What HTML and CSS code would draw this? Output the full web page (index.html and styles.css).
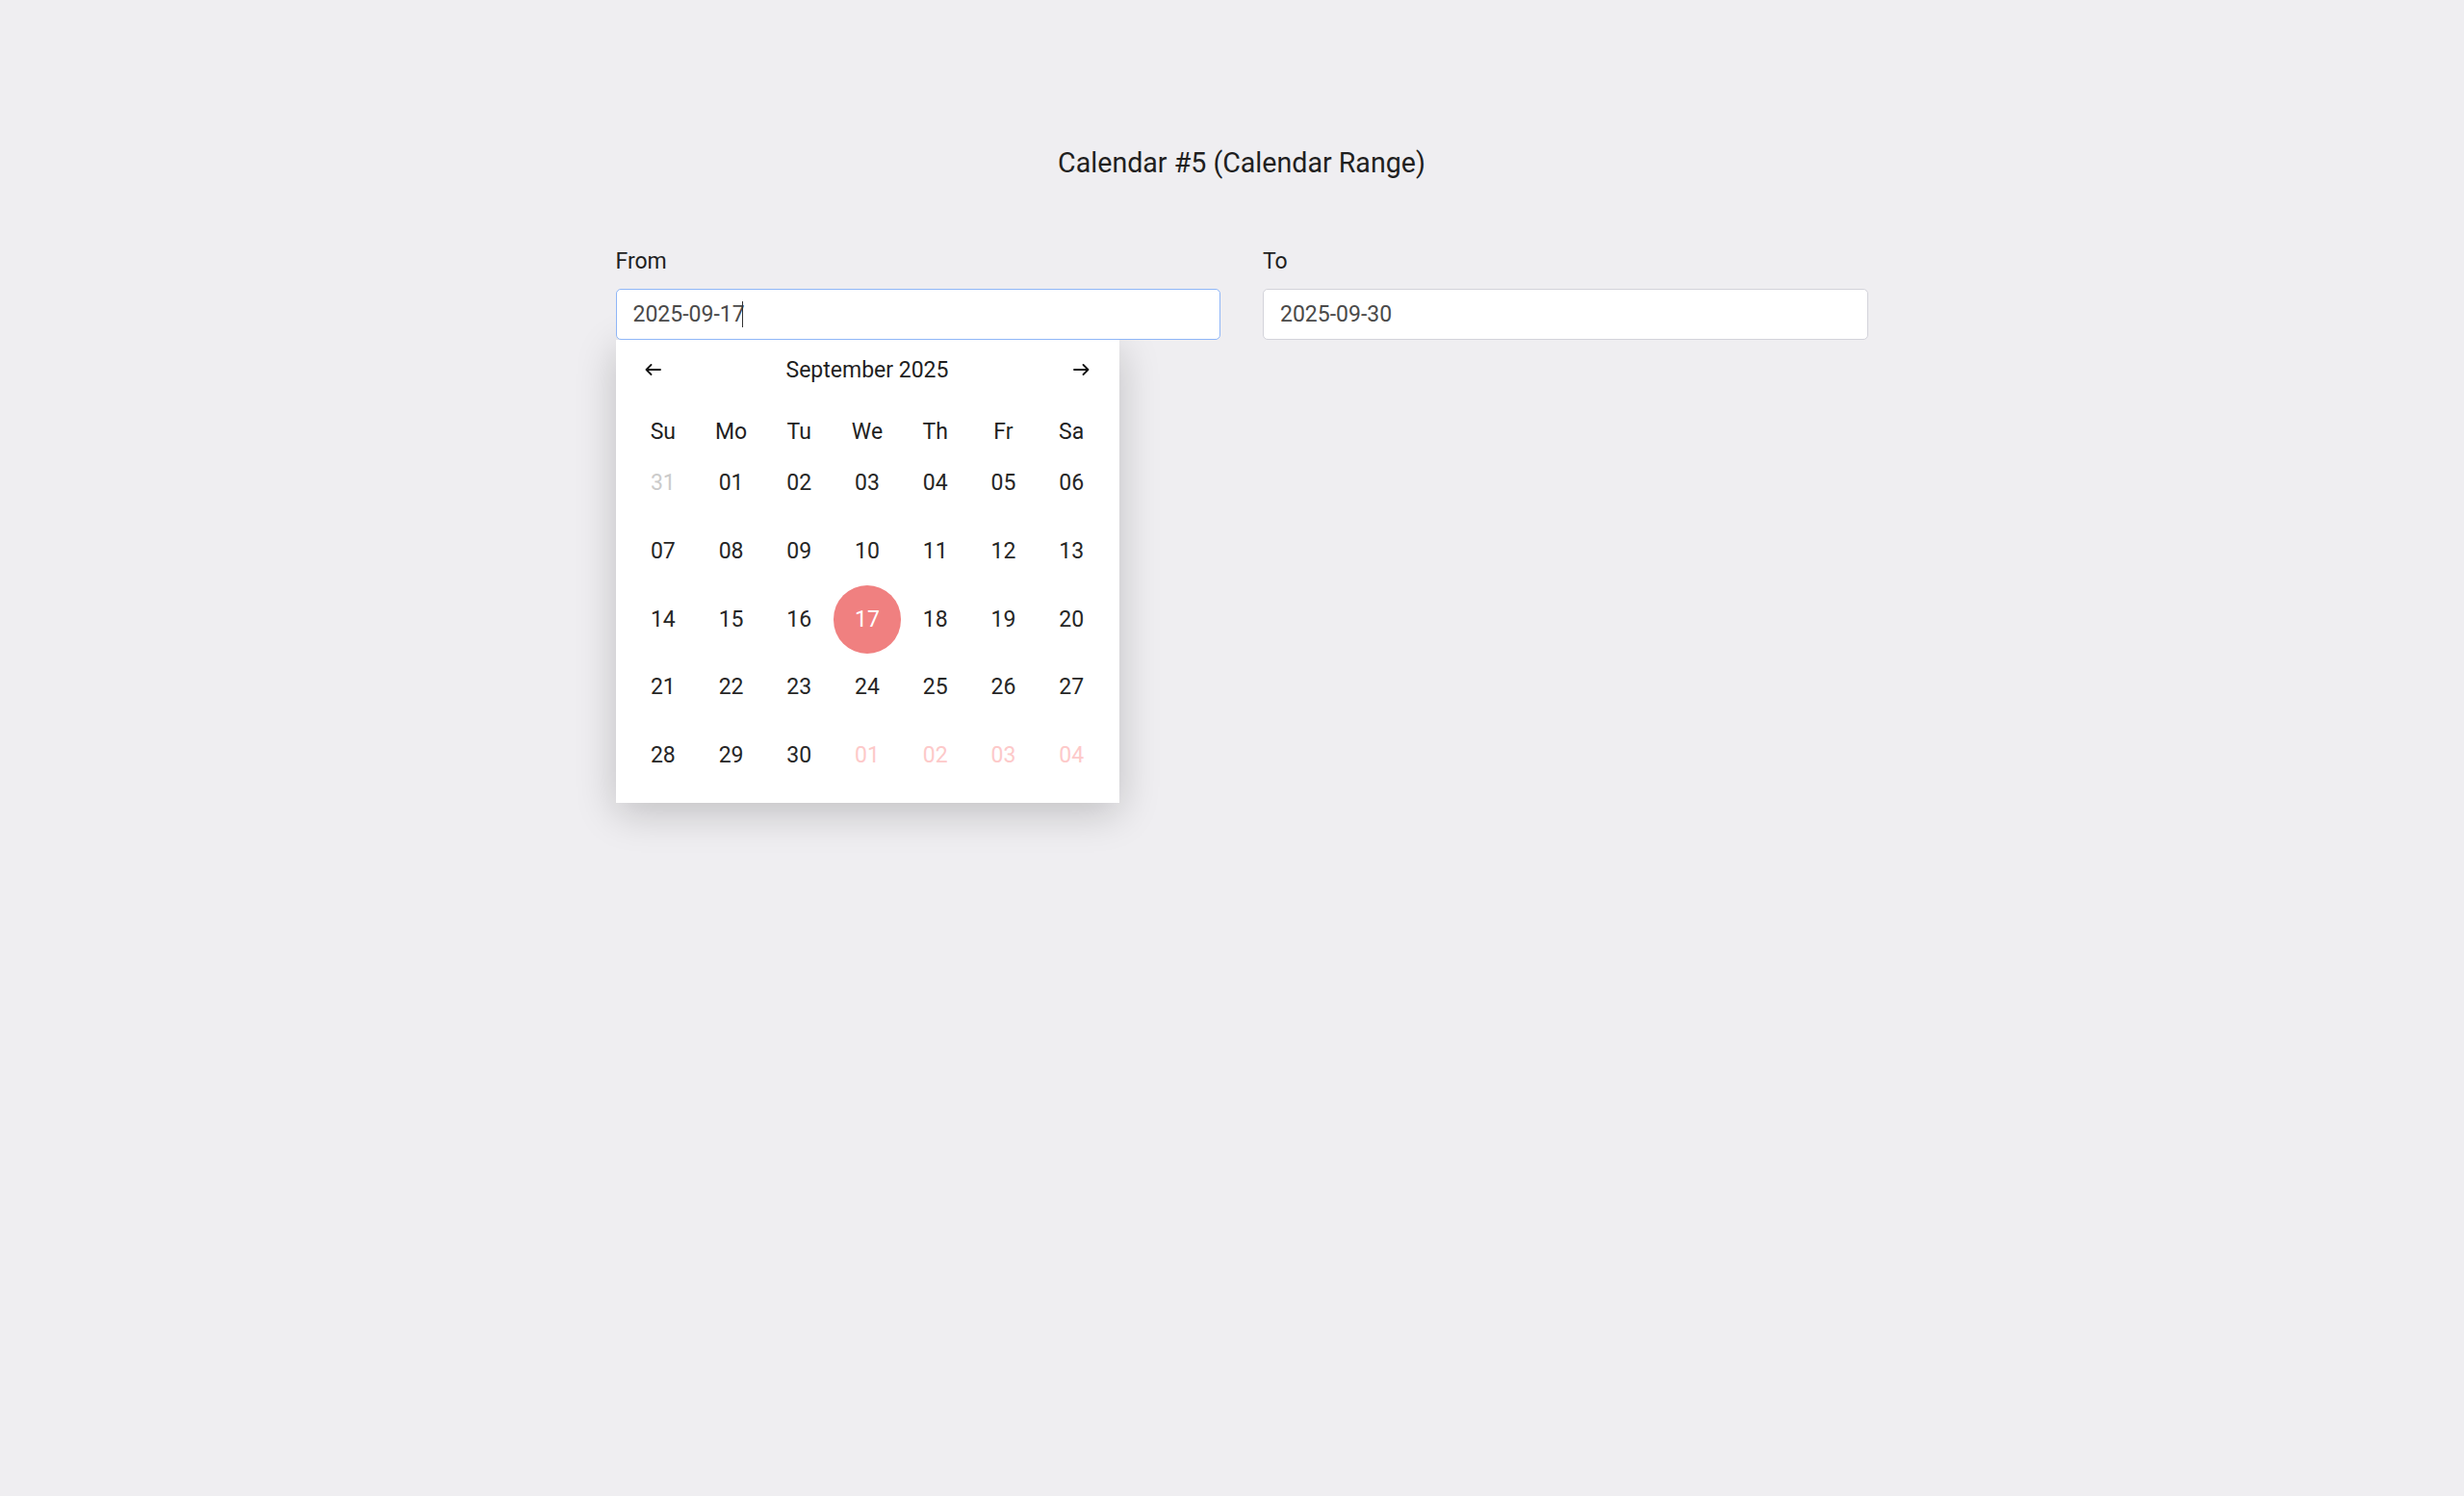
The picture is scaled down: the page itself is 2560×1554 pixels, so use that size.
FILE: index.html
```html
<!DOCTYPE html>
<html lang="en">
<head>
    <meta charset="UTF-8">
    <meta name="viewport" content="width=device-width, initial-scale=1.0">
    <title>Calendar #5 (Calendar Range)</title>
    <link rel="stylesheet" href="styles.css">
</head>
<body>
    <div class="page">
        <h1 class="page-title">Calendar #5 (Calendar Range)</h1>

        <div class="range">
            <div class="range-field">
                <label for="from-input">From</label>
                <div class="input-wrap">
                    <input type="text" id="from-input" class="date-input is-active" value="2025-09-17">
                    <!-- text cursor after the typed value -->
                    <span class="caret"></span>
                </div>

                <div class="calendar">
                    <div class="calendar-header">
                        <button class="nav-btn" aria-label="Previous month">
                            <svg width="17" height="12" viewBox="0 0 17 12" fill="none" stroke="#111" stroke-width="1.8" stroke-linecap="round" stroke-linejoin="round">
                                <path d="M16 6H1.5M6.5 1L1.5 6l5 5"/>
                            </svg>
                        </button>
                        <div class="month-name">September 2025</div>
                        <button class="nav-btn" aria-label="Next month">
                            <svg width="17" height="12" viewBox="0 0 17 12" fill="none" stroke="#111" stroke-width="1.8" stroke-linecap="round" stroke-linejoin="round">
                                <path d="M1 6h14.5M10.5 1l5 5-5 5"/>
                            </svg>
                        </button>
                    </div>

                    <div class="weekdays">
                        <span>Su</span><span>Mo</span><span>Tu</span><span>We</span><span>Th</span><span>Fr</span><span>Sa</span>
                    </div>

                    <div class="days">
                        <span class="day prev">31</span>
                        <span class="day">01</span>
                        <span class="day">02</span>
                        <span class="day">03</span>
                        <span class="day">04</span>
                        <span class="day">05</span>
                        <span class="day">06</span>

                        <span class="day">07</span>
                        <span class="day">08</span>
                        <span class="day">09</span>
                        <span class="day">10</span>
                        <span class="day">11</span>
                        <span class="day">12</span>
                        <span class="day">13</span>

                        <span class="day">14</span>
                        <span class="day">15</span>
                        <span class="day">16</span>
                        <span class="day selected">17</span>
                        <span class="day">18</span>
                        <span class="day">19</span>
                        <span class="day">20</span>

                        <span class="day">21</span>
                        <span class="day">22</span>
                        <span class="day">23</span>
                        <span class="day">24</span>
                        <span class="day">25</span>
                        <span class="day">26</span>
                        <span class="day">27</span>

                        <span class="day">28</span>
                        <span class="day">29</span>
                        <span class="day">30</span>
                        <span class="day next">01</span>
                        <span class="day next">02</span>
                        <span class="day next">03</span>
                        <span class="day next">04</span>
                    </div>
                </div>
            </div>

            <div class="range-field">
                <label for="to-input">To</label>
                <input type="text" id="to-input" class="date-input" value="2025-09-30">
            </div>
        </div>
    </div>
</body>
</html>
```

FILE: styles.css
```css
html,
body {
    min-height: 100%;
}

body {
    margin: 0;
    background-color: #efeef1;
    font-family: Roboto, "Liberation Sans", Arial, sans-serif;
    color: #222;
}

.page {
    padding: 151px 0 200px 20px;
}

.page-title {
    margin: 0;
    font-size: 28.6px;
    font-weight: 400;
    line-height: 36px;
    text-align: center;
    color: #1f1f1f;
}

.range {
    display: flex;
    align-items: flex-start;
    gap: 44px;
    width: 1301px;
    margin: 70px auto 0;
}

.range-field {
    flex: 1;
    display: flex;
    flex-direction: column;
}

.range-field label {
    font-size: 23px;
    line-height: 30px;
    margin-bottom: 13px;
    color: #1f1f1f;
}

.input-wrap {
    position: relative;
}

.date-input {
    box-sizing: border-box;
    width: 100%;
    height: 53px;
    padding: 0 17px;
    font-family: inherit;
    font-size: 23px;
    color: #4a4a4a;
    background-color: #fff;
    border: 1px solid #d3d3da;
    border-radius: 5px;
    outline: none;
}

.date-input.is-active,
.date-input:focus {
    border-color: #8fb6f7;
}

.caret {
    position: absolute;
    left: 131px;
    top: 13px;
    width: 1.5px;
    height: 27px;
    background-color: #333;
}

.calendar {
    box-sizing: border-box;
    width: 523px;
    padding: 14px;
    background-color: #fff;
    box-shadow: 0 10px 40px rgba(0, 0, 0, 0.2);
}

.calendar-header {
    display: flex;
    justify-content: space-between;
    align-items: center;
    height: 34px;
    padding: 0 16px;
    margin-bottom: 29.5px;
}

.nav-btn {
    display: flex;
    padding: 0;
    border: none;
    background: none;
    cursor: pointer;
}

.month-name {
    font-size: 23px;
    color: #1f1f1f;
}

.weekdays {
    display: grid;
    grid-template-columns: repeat(7, 1fr);
    height: 36px;
    align-items: center;
    text-align: center;
    font-size: 23px;
    color: #1f1f1f;
}

.days {
    display: grid;
    grid-template-columns: repeat(7, 1fr);
    grid-auto-rows: 70.7px;
}

.day {
    display: flex;
    align-items: center;
    justify-content: center;
    font-size: 23px;
    color: #262626;
    border-radius: 50%;
    cursor: pointer;
}

.day.prev {
    color: #cbcbcb;
}

.day.next {
    color: #fdc9c9;
}

.day.selected {
    background-color: #f08080;
    color: #fff;
}
```
